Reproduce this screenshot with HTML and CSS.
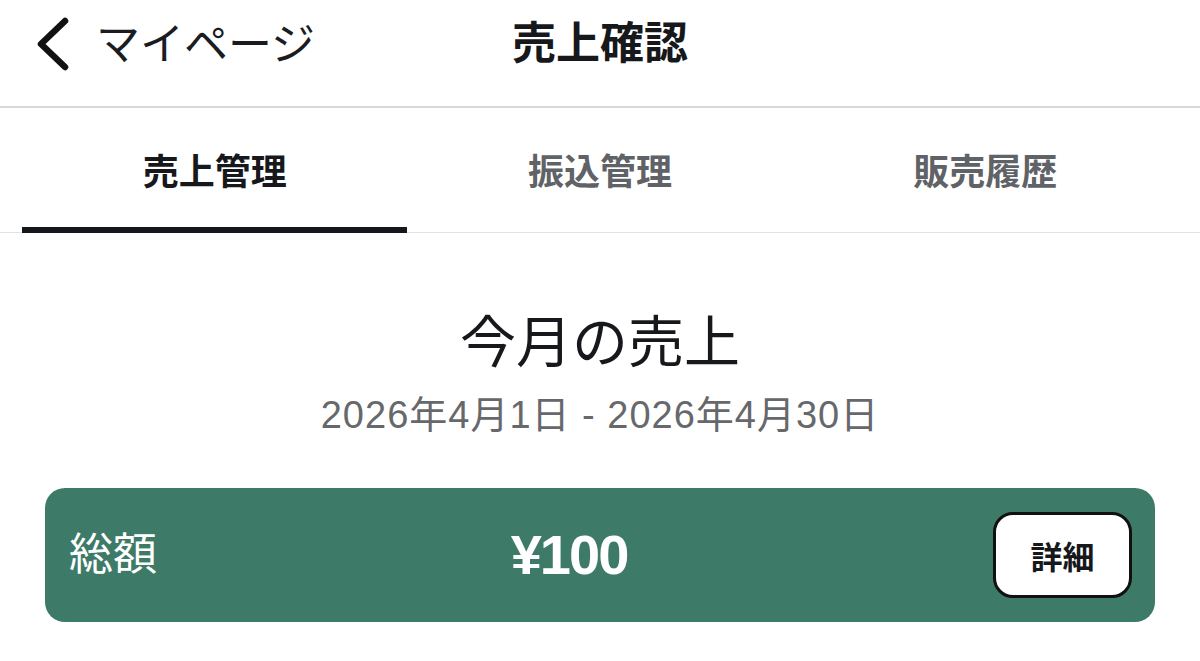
FILE: index.html
```html
<!DOCTYPE html>
<html lang="ja">
<head>
<meta charset="utf-8">
<title>売上確認</title>
<link rel="stylesheet" href="styles.css">
</head>
<body>
<header class="nav">
  <a class="back" href="#">
    <svg class="back-icon" width="40" height="60" viewBox="0 0 40 60" aria-hidden="true">
      <polyline points="35,7 11,30 35,53" fill="none" stroke="#111" stroke-width="6.5" stroke-linecap="round" stroke-linejoin="round"/>
    </svg>
    <span class="back-label">マイページ</span>
  </a>
  <h1 class="nav-title">売上確認</h1>
  <div class="nav-spacer"></div>
</header>
<nav class="tabs">
  <div class="tab active">売上管理</div>
  <div class="tab">振込管理</div>
  <div class="tab">販売履歴</div>
</nav>
<main class="content">
  <h2 class="period-title">今月の売上</h2>
  <p class="period-range">2026年4月1日 - 2026年4月30日</p>
  <section class="total-card">
    <span class="total-label">総額</span>
    <span class="total-amount">¥100</span>
    <button class="detail-btn" type="button">詳細</button>
  </section>
</main>
</body>
</html>
```
FILE: styles.css
```css
* { box-sizing: border-box; }
html, body { margin: 0; padding: 0; background: #fff; }
body {
  font-family: "Liberation Sans", "Noto Sans CJK JP", sans-serif;
  color: #1a1c1f;
  width: 1200px;
  height: 661px;
  overflow: hidden;
}

.nav {
  display: grid;
  grid-template-columns: 1fr auto 1fr;
  align-items: center;
  height: 108px;
  padding: 0 30px 18px;
  border-bottom: 2px solid #d8d8d8;
}
.back {
  display: flex;
  align-items: center;
  gap: 26px;
  text-decoration: none;
  color: #1a1c1f;
}
.back-icon { display: block; }
.back-label {
  font-size: 44px;
  line-height: 1;
  font-weight: 400;
  margin-top: 2px;
}
.nav-title {
  margin: 0;
  font-size: 44px;
  line-height: 1;
  font-weight: 700;
  color: #16181b;
}

.tabs {
  display: flex;
  padding: 0 22px;
  border-bottom: 1px solid #e2e2e2;
}
.tab {
  flex: 1;
  height: 125px;
  margin-bottom: -1px;
  padding-top: 2px;
  border-bottom: 6px solid transparent;
  display: flex;
  align-items: center;
  justify-content: center;
  font-size: 36px;
  font-weight: 700;
  color: #5f6266;
}
.tab.active {
  color: #16181b;
  border-bottom-color: #14181d;
}

.content {
  padding: 76px 45px 0;
  text-align: center;
}
.period-title {
  margin: 0;
  font-size: 56px;
  line-height: 67px;
  font-weight: 400;
  color: #16181b;
}
.period-range {
  margin: 17px 0 0;
  font-size: 38px;
  line-height: 44px;
  letter-spacing: 1px;
  color: #66686b;
}

.total-card {
  margin-top: 51px;
  display: flex;
  align-items: center;
  height: 134px;
  padding: 0 23px 0 24px;
  background: #3e7a68;
  border-radius: 20px;
  color: #fff;
}
.total-label {
  font-size: 44px;
  line-height: 1;
  font-weight: 400;
}
.total-amount {
  flex: 1;
  text-align: center;
  font-size: 56px;
  line-height: 1;
  font-weight: 700;
  letter-spacing: -2px;
  padding-right: 12px;
}
.detail-btn {
  width: 139px;
  height: 86px;
  background: #fff;
  border: 3px solid #111;
  border-radius: 20px;
  font-family: inherit;
  font-size: 32px;
  font-weight: 700;
  color: #16181b;
  padding: 0;
  cursor: pointer;
}
```
